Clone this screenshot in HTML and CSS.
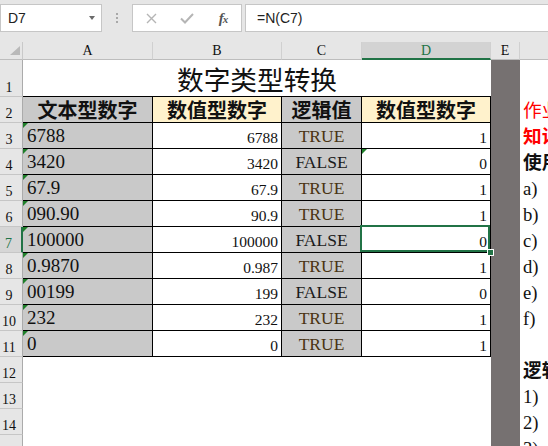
FILE: index.html
```html
<!DOCTYPE html>
<html lang="zh-CN">
<head>
<meta charset="utf-8">
<title>数字类型转换</title>
<link rel="stylesheet" href="styles.css">
</head>
<body>
<div class="toolbar">
  <div class="namebox"><span class="ref">D7</span><span class="dd"></span></div>
  <div class="dots"><i></i><i></i><i></i></div>
  <div class="fxbox">
    <span class="slot"><svg width="11" height="11" viewBox="0 0 11 11"><path d="M1 1L10 10M10 1L1 10" stroke="#b5b5b5" stroke-width="1.4" fill="none"/></svg></span>
    <span class="slot"><svg width="14" height="11" viewBox="0 0 14 11"><path d="M1 5.5L5 9.5L13 1" stroke="#b5b5b5" stroke-width="2" fill="none"/></svg></span>
    <span class="slot fx">f<span class="fxx">x</span></span>
  </div>
  <div class="formula">=N(C7)</div>
</div>

<div class="sheet">
  <div class="corner"><span class="tri-corner"></span></div>
  <div class="ch">A</div>
  <div class="ch">B</div>
  <div class="ch">C</div>
  <div class="ch sel">D</div>
  <div class="ch">E</div>
  <div class="ch last"></div>

  <div class="ecol"></div>

  <div class="rh">1</div>
  <div class="title">数字类型转换</div>
  <div class="f"></div>

  <div class="rh">2</div>
  <div class="c t h grey">文本型数字</div>
  <div class="c t h yel">数值型数字</div>
  <div class="c t h grey">逻辑值</div>
  <div class="c t h yel">数值型数字</div>
  <div class="f red">作业要求：</div>

  <div class="rh">3</div>
  <div class="c t a err">6788</div>
  <div class="c t b">6788</div>
  <div class="c t cc tru">TRUE</div>
  <div class="c t d">1</div>
  <div class="f red bold">知识点：</div>

  <div class="rh">4</div>
  <div class="c t a err">3420</div>
  <div class="c t b">3420</div>
  <div class="c t cc fal">FALSE</div>
  <div class="c t d err">0</div>
  <div class="f bold">使用N函数</div>

  <div class="rh">5</div>
  <div class="c t a err">67.9</div>
  <div class="c t b">67.9</div>
  <div class="c t cc tru">TRUE</div>
  <div class="c t d">1</div>
  <div class="f">a)</div>

  <div class="rh">6</div>
  <div class="c t a err">090.90</div>
  <div class="c t b">90.9</div>
  <div class="c t cc tru">TRUE</div>
  <div class="c t d">1</div>
  <div class="f">b)</div>

  <div class="rh rsel">7</div>
  <div class="c t a err">100000</div>
  <div class="c t b">100000</div>
  <div class="c t cc fal">FALSE</div>
  <div class="c t d active">0</div>
  <div class="f">c)</div>

  <div class="rh">8</div>
  <div class="c t a err">0.9870</div>
  <div class="c t b">0.987</div>
  <div class="c t cc tru">TRUE</div>
  <div class="c t d">1</div>
  <div class="f">d)</div>

  <div class="rh">9</div>
  <div class="c t a err">00199</div>
  <div class="c t b">199</div>
  <div class="c t cc fal">FALSE</div>
  <div class="c t d">0</div>
  <div class="f">e)</div>

  <div class="rh">10</div>
  <div class="c t a err">232</div>
  <div class="c t b">232</div>
  <div class="c t cc tru">TRUE</div>
  <div class="c t d">1</div>
  <div class="f">f)</div>

  <div class="rh">11</div>
  <div class="c t a err">0</div>
  <div class="c t b">0</div>
  <div class="c t cc tru">TRUE</div>
  <div class="c t d">1</div>
  <div class="f"></div>

  <div class="rh">12</div>
  <div class="f bold">逻辑值</div>

  <div class="rh">13</div>
  <div class="f">1)</div>

  <div class="rh">14</div>
  <div class="f">2)</div>

  <div class="rh">15</div>
  <div class="f">3)</div>
</div>
</body>
</html>
```

FILE: styles.css
```css
html, body {
  margin: 0;
  padding: 0;
}
body {
  width: 548px;
  height: 446px;
  overflow: hidden;
  background: #ffffff;
  font-family: "Liberation Serif", "Noto Sans CJK SC", serif;
  color: #111111;
}

/* ---------- formula bar ---------- */
.toolbar {
  display: flex;
  align-items: flex-start;
  height: 42px;
  padding-top: 4px;
  box-sizing: border-box;
  background: #e6e6e6;
}
.namebox {
  box-sizing: border-box;
  width: 102px;
  height: 28px;
  background: #ffffff;
  border: 1px solid #c6c6c6;
  display: flex;
  align-items: center;
  justify-content: space-between;
  padding: 0 6px 0 7px;
  font-family: "Liberation Sans", Arial, sans-serif;
  font-size: 14px;
  color: #222222;
}
.dd {
  width: 0;
  height: 0;
  border-left: 3px solid transparent;
  border-right: 3px solid transparent;
  border-top: 4px solid #6a6a6a;
}
.dots {
  width: 30px;
  height: 28px;
  display: flex;
  flex-direction: column;
  align-items: center;
  justify-content: center;
  gap: 2px;
}
.dots i {
  display: block;
  width: 2px;
  height: 2px;
  background: #a8a8a8;
}
.fxbox {
  box-sizing: border-box;
  width: 110px;
  height: 28px;
  margin-right: 3px;
  background: #ffffff;
  border: 1px solid #c6c6c6;
  display: flex;
  align-items: center;
}
.slot {
  width: 36px;
  display: flex;
  justify-content: center;
  align-items: center;
}
.fx {
  font-family: "Liberation Serif", serif;
  font-style: italic;
  font-weight: bold;
  font-size: 15px;
  color: #555555;
  letter-spacing: -1px;
}
.fxx {
  font-size: 11px;
  position: relative;
  top: 1px;
}
.formula {
  flex: 1;
  box-sizing: border-box;
  height: 28px;
  background: #ffffff;
  border: 1px solid #c6c6c6;
  border-right: none;
  display: flex;
  align-items: center;
  padding-left: 11px;
  font-family: "Liberation Sans", Arial, sans-serif;
  font-size: 14px;
  color: #222222;
}

/* ---------- sheet grid ---------- */
.sheet {
  display: grid;
  grid-template-columns: 23px 130px 129px 80px 129px 29px 1fr;
  grid-template-rows: 18px 37px repeat(14, 26px);
  background: #ffffff;
}
.sheet > div {
  box-sizing: border-box;
  min-width: 0;
}

.corner {
  background: #e6e6e6;
  border-right: 1px solid #c9c9c9;
  border-bottom: 1px solid #bdbdbd;
  display: flex;
  justify-content: flex-end;
  align-items: flex-end;
  padding: 0 2px 4px 0;
}
.tri-corner {
  width: 0;
  height: 0;
  border-left: 10px solid transparent;
  border-bottom: 9px solid #b9b9b9;
}
.ch {
  background: #e6e6e6;
  border-right: 1px solid #d0d0d0;
  border-bottom: 1px solid #bdbdbd;
  display: flex;
  justify-content: center;
  align-items: flex-end;
  padding-bottom: 1px;
  font-size: 14px;
  line-height: 14px;
  color: #111111;
}
.ch.last {
  border-right: none;
}
.ch.sel {
  background: #d3d3d3;
  color: #217346;
  border-bottom: 2px solid #217346;
  padding-bottom: 0;
}

.rh {
  grid-column: 1;
  background: #e6e6e6;
  border-right: 1px solid #ababab;
  border-bottom: 1px solid #c6c6c6;
  display: flex;
  justify-content: center;
  align-items: flex-end;
  padding: 0 4px 1px 0;
  font-size: 14px;
  line-height: 14px;
  color: #111111;
}
.rh.rsel {
  background: #d6d6d6;
  color: #217346;
  border-right: 2px solid #217346;
}

.ecol {
  grid-column: 6;
  grid-row: 2 / span 15;
  background: #767171;
}

.title {
  grid-column: 2 / span 4;
  border-bottom: 1px solid #000000;
  display: flex;
  justify-content: center;
  align-items: flex-end;
  padding-bottom: 3px;
  font-family: "Noto Sans CJK SC", sans-serif;
  font-size: 26.67px;
  line-height: 26.67px;
  color: #111111;
}

.c {
  display: flex;
  align-items: flex-end;
  white-space: nowrap;
  position: relative;
}
.t {
  border-right: 1px solid #000000;
  border-bottom: 1px solid #000000;
}
.h {
  justify-content: center;
  padding-bottom: 2px;
  font-family: "Noto Sans CJK SC", sans-serif;
  font-weight: bold;
  font-size: 20px;
  line-height: 20px;
  color: #111111;
}
.grey { background: #c9c9c9; }
.yel { background: #fff2cc; }

.a {
  background: #c9c9c9;
  padding: 0 0 3px 4px;
  font-size: 19px;
  line-height: 19px;
}
.b, .d {
  background: #ffffff;
  justify-content: flex-end;
  padding: 0 3px 3px 0;
  font-size: 15.5px;
  line-height: 15.5px;
}
.cc {
  background: #c9c9c9;
  justify-content: center;
  padding-bottom: 3px;
  font-size: 17.5px;
  line-height: 17.5px;
}
.tru { color: #4a3412; }
.fal { color: #1a1a1a; }

/* green "number stored as text" indicator */
.err::before {
  content: "";
  position: absolute;
  top: 0;
  left: 0;
  width: 0;
  height: 0;
  border-top: 5px solid #1f7f2a;
  border-right: 5px solid transparent;
}

/* active cell */
.active::after {
  content: "";
  position: absolute;
  left: -2px;
  top: -2px;
  right: 0;
  bottom: 0;
  border: 2px solid #217346;
  pointer-events: none;
}
.active::before {
  content: "";
  position: absolute;
  right: -4px;
  bottom: -4px;
  width: 5px;
  height: 5px;
  background: #217346;
  border: 1px solid #ffffff;
  z-index: 2;
}

.f {
  grid-column: 7;
  display: flex;
  align-items: flex-end;
  white-space: nowrap;
  padding: 0 0 2px 3px;
  font-family: "Liberation Serif", "Noto Sans CJK SC", serif;
  font-size: 18.67px;
  line-height: 18.67px;
  color: #111111;
}
.red { color: #ff0000; }
.bold { font-weight: bold; }
```
